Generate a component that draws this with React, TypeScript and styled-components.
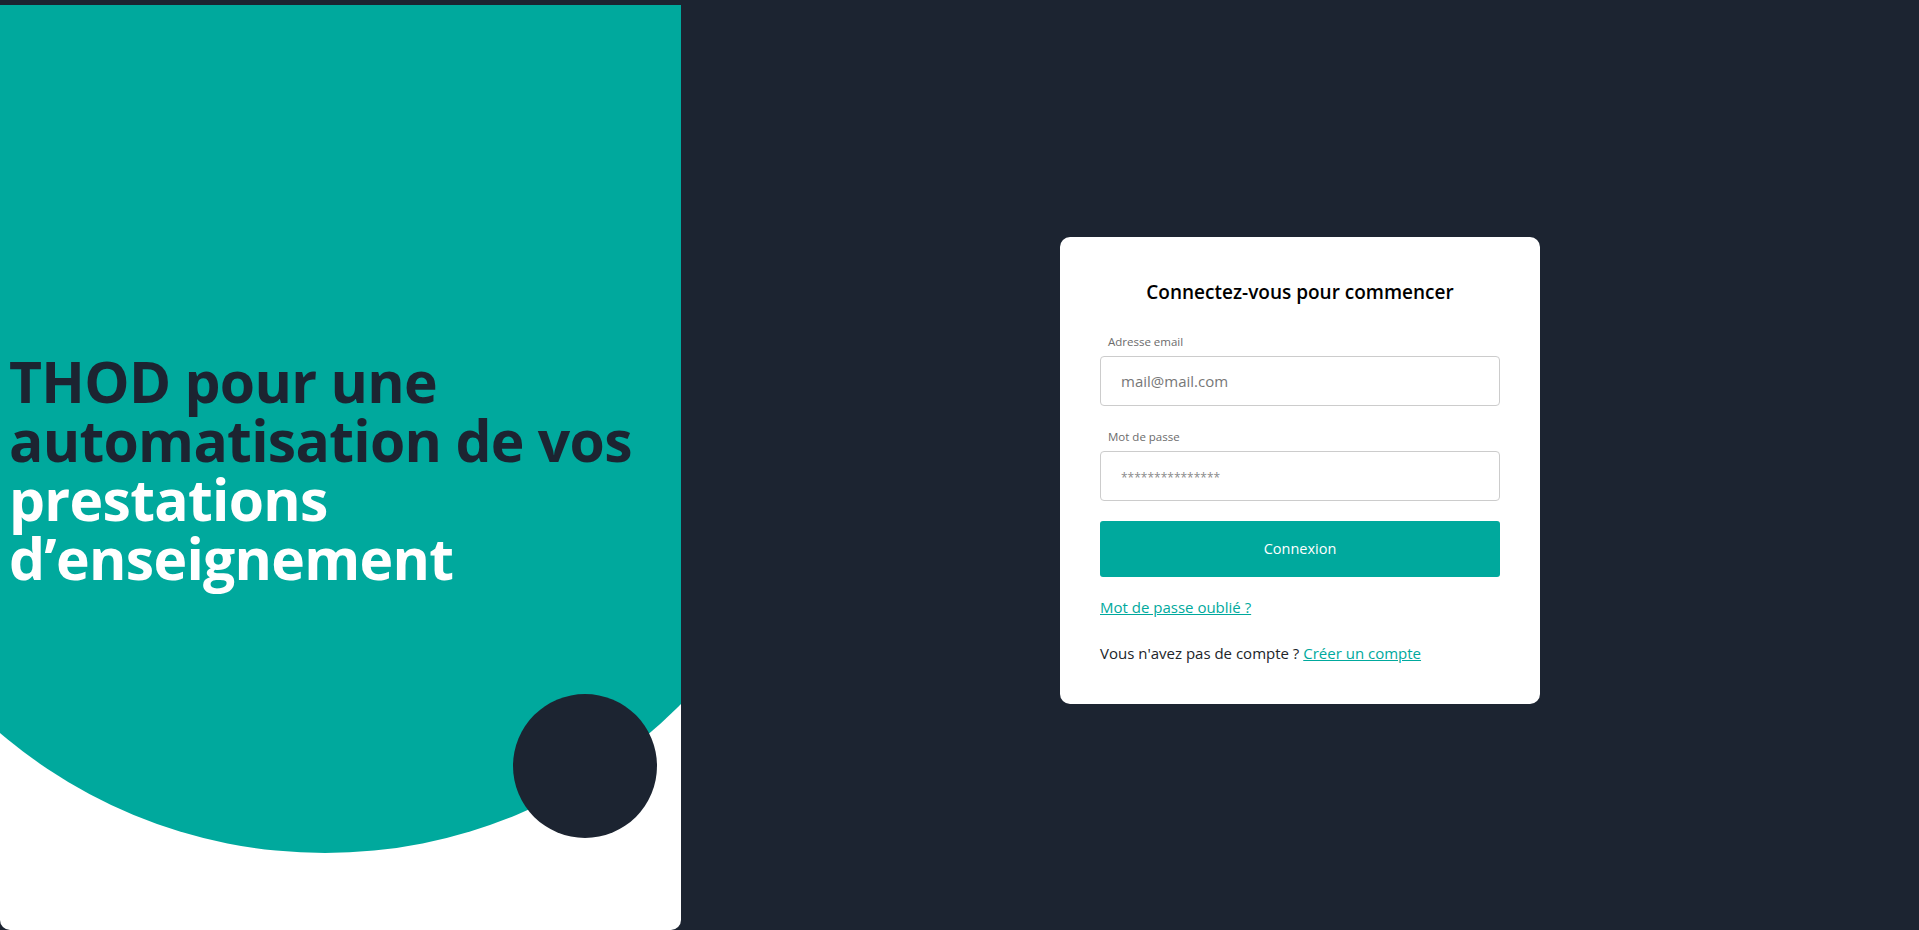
import React from "react";
import styled, { createGlobalStyle } from "styled-components";

const GlobalStyle = createGlobalStyle`
  html, body {
    margin: 0;
    padding: 0;
    background: #1c2431;
    font-family: "Open Sans", "Noto Sans", Arial, sans-serif;
  }
  * { box-sizing: border-box; }
`;

const Page = styled.div`
  display: flex;
  height: 930px;
  padding-top: 5px;
  background: #1c2431;
  overflow: hidden;
`;

const Hero = styled.section`
  position: relative;
  width: 681px;
  flex-shrink: 0;
  height: 925px;
  background: #ffffff;
  border-radius: 0 0 10px 10px;
  overflow: hidden;
  display: flex;
  align-items: center;
`;

const BigDisc = styled.div`
  position: absolute;
  left: -175px;
  top: -152px;
  width: 1000px;
  height: 1000px;
  border-radius: 50%;
  background: #00a99d;
`;

const SmallDisc = styled.div`
  position: absolute;
  left: 513px;
  top: 689px;
  width: 144px;
  height: 144px;
  border-radius: 50%;
  background: #1c2431;
`;

const Headline = styled.h1`
  position: relative;
  z-index: 1;
  margin: 4px 0 0 0;
  padding-left: 9px;
  font-family: "Open Sans", "Noto Sans", sans-serif;
  font-weight: 700;
  font-size: 57px;
  line-height: 59px;
  letter-spacing: -0.7px;
`;

const Tone = styled.span<{ $light?: boolean }>`
  display: block;
  color: ${(p) => (p.$light ? "#ffffff" : "#1c2431")};
`;

const Side = styled.main`
  flex: 1;
  display: flex;
  align-items: center;
  justify-content: center;
  padding-top: 5px;
`;

const Card = styled.form`
  width: 480px;
  background: #ffffff;
  border-radius: 10px;
  padding: 42px 40px 40px;
  display: flex;
  flex-direction: column;
`;

const Title = styled.h2`
  margin: 0 0 29px;
  text-align: center;
  font-size: 19px;
  line-height: 26px;
  font-weight: 600;
  color: #000;
`;

const Field = styled.div`
  display: flex;
  flex-direction: column;
  & + & {
    margin-top: 23px;
  }
`;

const Label = styled.label`
  font-size: 11.5px;
  line-height: 16px;
  color: #6c6c6c;
  padding-left: 8px;
  margin-bottom: 6px;
`;

const Input = styled.input<{ $small?: boolean }>`
  height: 50px;
  width: 100%;
  border: 1px solid #cccccc;
  border-radius: 4px;
  padding: 0 20px;
  font-family: inherit;
  font-size: 15px;
  color: #333;
  outline: none;
  &::placeholder {
    color: ${(p) => (p.$small ? "#8a8a8a" : "#777777")};
    font-size: ${(p) => (p.$small ? "12px" : "15px")};
  }
`;

const Submit = styled.button`
  margin-top: 20px;
  height: 56px;
  border: none;
  border-radius: 3px;
  background: #00a99d;
  color: #ffffff;
  font-family: inherit;
  font-size: 14.5px;
  cursor: pointer;
`;

const LinkLine = styled.p<{ $gap: number }>`
  margin: ${(p) => p.$gap}px 0 0;
  font-size: 15px;
  line-height: 22px;
  color: #212529;
`;

const Anchor = styled.a`
  color: #00a99d;
  text-decoration: underline;
`;

export default function App() {
  return (
    <>
      <GlobalStyle />
      <Page>
        <Hero>
          <BigDisc />
          <SmallDisc />
          <Headline>
            <Tone>THOD pour une</Tone>
            <Tone>automatisation de vos</Tone>
            <Tone $light>prestations</Tone>
            <Tone $light>d’enseignement</Tone>
          </Headline>
        </Hero>
        <Side>
          <Card onSubmit={(e) => e.preventDefault()}>
            <Title>Connectez-vous pour commencer</Title>
            <Field>
              <Label htmlFor="email">Adresse email</Label>
              <Input id="email" type="email" placeholder="mail@mail.com" />
            </Field>
            <Field>
              <Label htmlFor="pwd">Mot de passe</Label>
              <Input id="pwd" type="password" $small placeholder="***************" />
            </Field>
            <Submit type="submit">Connexion</Submit>
            <LinkLine $gap={19}>
              <Anchor href="#">Mot de passe oublié ?</Anchor>
            </LinkLine>
            <LinkLine $gap={24}>
              Vous n'avez pas de compte ? <Anchor href="#">Créer un compte</Anchor>
            </LinkLine>
          </Card>
        </Side>
      </Page>
    </>
  );
}
